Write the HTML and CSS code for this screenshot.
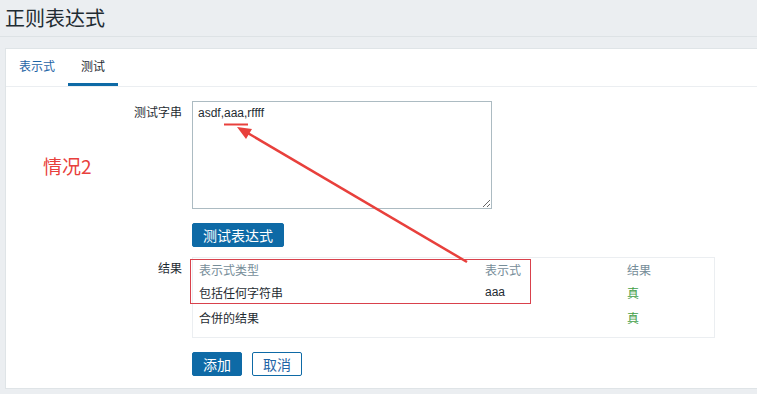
FILE: index.html
```html
<!DOCTYPE html>
<html lang="zh">
<head>
  <meta charset="UTF-8">
  <meta name="viewport" content="width=device-width, initial-scale=1.0">
  <title>正则表达式</title>
  <link rel="stylesheet" href="styles.css">
</head>
<body>
  <header class="page-header">
    <h1>正则表达式</h1>
  </header>

  <div class="card">
    <ul class="tabs">
      <li class="tab">表示式</li>
      <li class="tab active">测试</li>
    </ul>

    <div class="form">
      <label class="form-label" for="test-string">测试字串</label>
      <div class="form-field">
        <textarea id="test-string" class="test-input">asdf,aaa,rffff</textarea>
      </div>

      <div class="form-label"></div>
      <div class="form-field">
        <button class="btn">测试表达式</button>
      </div>

      <div class="form-label">结果</div>
      <div class="form-field">
        <table class="result-table">
          <thead>
            <tr>
              <th class="col-type">表示式类型</th>
              <th class="col-expr">表示式</th>
              <th>结果</th>
            </tr>
          </thead>
          <tbody>
            <tr class="row-first">
              <td>包括任何字符串</td>
              <td class="latin">aaa</td>
              <td class="ok">真</td>
            </tr>
            <tr class="row-combined">
              <td>合併的结果</td>
              <td></td>
              <td class="ok">真</td>
            </tr>
          </tbody>
        </table>
      </div>

      <div class="form-label"></div>
      <div class="form-field actions">
        <button class="btn">添加</button>
        <button class="btn btn-alt">取消</button>
      </div>
    </div>
  </div>

  <!-- annotation drawn on top of the screenshot -->
  <div class="note">情况2</div>
  <div class="note-box"></div>
  <svg class="note-arrow" width="757" height="394" viewBox="0 0 757 394">
    <line x1="224" y1="124.5" x2="248" y2="124.5" stroke="#e8403c" stroke-width="2"/>
    <line x1="467" y1="262" x2="246" y2="132" stroke="#e8403c" stroke-width="2.5"/>
    <polygon points="237,127 252,129 246,139" fill="#e8403c"/>
  </svg>
</body>
</html>
```

FILE: styles.css
```css
/* General */
body {
  margin: 0;
  padding: 0;
  background: #ebeef1;
  font-family: 'Liberation Sans', 'Noto Sans CJK SC', sans-serif;
  font-size: 12px;
  color: #1f2c33;
  position: relative;
  height: 394px;
  overflow: hidden;
}

/* Page title */
.page-header {
  height: 36px;
  padding: 0 5px;
  border-bottom: 1px solid #dde2e5;
}

h1 {
  margin: 0;
  padding-top: 6px;
  font-size: 20px;
  font-weight: normal;
  line-height: 26px;
  color: #1f2c33;
}

/* Card */
.card {
  margin: 11px 0 0 5px;
  background: #fff;
  border: 1px solid #dfe4e7;
  border-right: none;
  height: 339px;
}

.tabs {
  display: flex;
  margin: 0;
  padding: 0;
  list-style: none;
  height: 37px;
  border-bottom: 1px solid #ebeef1;
}

.tab {
  padding: 0 13px;
  line-height: 36px;
  color: #1f65a6;
  border-bottom: 3px solid transparent;
  height: 34px;
}

.tab.active {
  color: #1f2c33;
  border-bottom-color: #0e6aa6;
}

/* Form */
.form {
  display: grid;
  grid-template-columns: 176px 1fr;
  column-gap: 10px;
  padding-top: 14px;
}

.form-label {
  text-align: right;
  padding-top: 5px;
  line-height: 14px;
}

.form-field {
  margin-bottom: 14px;
}

.test-input {
  display: block;
  width: 300px;
  height: 108px;
  box-sizing: border-box;
  margin: 0;
  padding: 4px 5px;
  border: 1px solid #acbbc2;
  font-family: 'Liberation Sans', sans-serif;
  font-size: 12px;
  color: #1f2c33;
  resize: both;
}

.form-field:nth-child(4) {
  margin-bottom: 10px;
}

.btn {
  height: 24px;
  padding: 0 10px;
  border: 1px solid #0e6aa6;
  border-radius: 2px;
  background: #0e6aa6;
  color: #fff;
  font-family: 'Noto Sans CJK SC', sans-serif;
  font-size: 14px;
  line-height: 20px;
}

.btn-alt {
  background: #fff;
  color: #1f65a6;
  margin-left: 10px;
}

.actions {
  display: flex;
}

/* Results */
.result-table {
  width: 523px;
  border: 1px solid #ebeef1;
  border-collapse: collapse;
  font-family: 'Noto Sans CJK SC', sans-serif;
  font-size: 12px;
}

.result-table th {
  font-weight: normal;
  color: #768d99;
  text-align: left;
  height: 23px;
  padding: 0 0 0 6px;
  vertical-align: middle;
}

.result-table td {
  padding: 0 0 0 6px;
  text-align: left;
}

.col-type {
  width: 280px;
}

.col-expr {
  width: 136px;
}

.row-first td {
  height: 22px;
}

.row-combined td {
  height: 28px;
  vertical-align: top;
  padding-top: 6px;
}

.latin {
  font-family: 'Liberation Sans', sans-serif;
}

.ok {
  color: #429e47;
}

/* Annotation */
.note {
  position: absolute;
  left: 43px;
  top: 152px;
  font-family: 'Noto Sans CJK SC', sans-serif;
  font-size: 19px;
  color: #e8403c;
}

.note-box {
  position: absolute;
  left: 190px;
  top: 259px;
  width: 339px;
  height: 43px;
  border: 1px solid #d9414c;
}

.note-arrow {
  position: absolute;
  left: 0;
  top: 0;
}
```
